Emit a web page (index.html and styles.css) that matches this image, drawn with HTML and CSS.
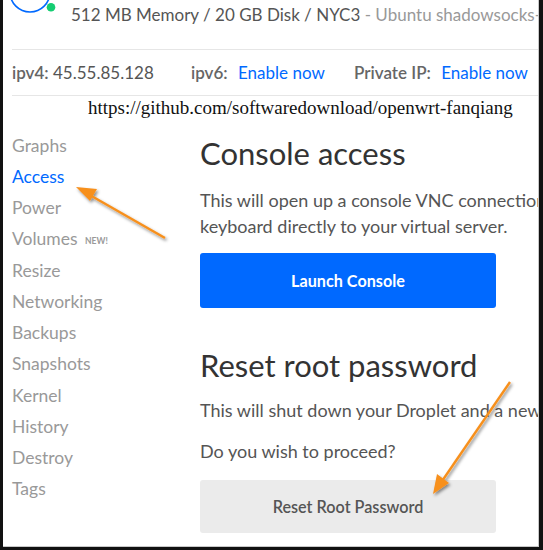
FILE: index.html
```html
<!DOCTYPE html>
<html>
<head>
<meta charset="utf-8">
<link rel="stylesheet" href="styles.css">
</head>
<body>
<div class="frame">
  <div class="inner">
    <header class="top">
      <svg class="logo" width="68" height="20" viewBox="0 0 68 20">
        <circle cx="27" cy="-8" r="20" fill="none" stroke="#0069ff" stroke-width="1.6"/>
        <circle cx="48" cy="7.3" r="4.3" fill="#15cd72"/>
      </svg>
      <span class="spec">512 MB Memory / 20 GB Disk / NYC3</span><span class="name">&nbsp;- Ubuntu shadowsocks-server</span>
    </header>
    <div class="ips">
      <span class="ip"><b>ipv4:</b> 45.55.85.128</span>
      <span class="ip"><b>ipv6:</b> <a>Enable now</a></span>
      <span class="ip"><b>Private IP:</b> <a>Enable now</a></span>
    </div>
    <div class="stamp">https://github.com/softwaredownload/openwrt-fanqiang</div>
    <div class="body">
      <nav class="side">
        <div class="item">Graphs</div>
        <div class="item active">Access</div>
        <div class="item">Power</div>
        <div class="item">Volumes <span class="new">NEW!</span></div>
        <div class="item">Resize</div>
        <div class="item">Networking</div>
        <div class="item">Backups</div>
        <div class="item">Snapshots</div>
        <div class="item">Kernel</div>
        <div class="item">History</div>
        <div class="item">Destroy</div>
        <div class="item">Tags</div>
      </nav>
      <main class="main">
        <h2 class="h">Console access</h2>
        <p class="txt"><span class="line">This will open up a console VNC connection to your Droplet, allowing you to use your mouse and</span><span class="line">keyboard directly to your virtual server.</span></p>
        <button class="btn primary">Launch Console</button>
        <h2 class="h h2">Reset root password</h2>
        <p class="txt t2"><span class="line">This will shut down your Droplet and a new password will be emailed to you.</span></p>
        <p class="txt q"><span class="line">Do you wish to proceed?</span></p>
        <button class="btn grey">Reset Root Password</button>
      </main>
    </div>
    <svg class="arrows" width="543" height="550" viewBox="0 0 543 550">
      <defs>
        <filter id="sh" x="-20%" y="-20%" width="140%" height="140%">
          <feDropShadow dx="1.5" dy="2" stdDeviation="1.5" flood-color="#000" flood-opacity="0.45"/>
        </filter>
      </defs>
      <g filter="url(#sh)" fill="#f7901e" stroke="#f7901e">
        <line x1="165" y1="238" x2="88" y2="194" stroke-width="2.4"/>
        <polygon points="76,187 97,189 90,201" stroke="none"/>
        <line x1="510" y1="382" x2="440" y2="484" stroke-width="2.4"/>
        <polygon points="433,494 437,474 449,483" stroke="none"/>
      </g>
    </svg>
  </div>
</div>
</body>
</html>
```
FILE: styles.css
```css
* { box-sizing: border-box; }
html, body { margin: 0; padding: 0; background: #fff; }
body { font-family: Lato, "Open Sans", sans-serif; color: #555; }
.frame {
  width: 543px; height: 550px;
  border-left: 3px solid #111;
  border-right: 4px solid #111;
  border-bottom: 3px solid #111;
  overflow: hidden;
}
.inner {
  position: relative;
  height: 100%;
  border-right: 1px solid #c8c8c8;
  border-bottom: 1px solid #c8c8c8;
  overflow: hidden;
}
.top {
  margin-left: 9px;
  height: 50px;
  padding-top: 1px;
  border-bottom: 1px solid #e6e6e6;
  display: flex;
  align-items: flex-start;
  white-space: nowrap;
  font-size: 17px;
  line-height: 27px;
}
.logo { display: block; margin-left: -9px; margin-top: -1px; flex: none; }
.spec { color: #555; }
.name { color: #999; }
.ips {
  margin-left: 9px;
  height: 46px;
  border-bottom: 1px solid #e6e6e6;
  display: grid;
  grid-template-columns: 179px 163px auto;
  align-items: center;
  white-space: nowrap;
  font-size: 17px;
  color: #555;
}
.ip b { font-weight: 600; color: #666; }
.ip a { color: #0069ff; margin-left: 6px; }
.stamp {
  font-family: "Liberation Serif", serif;
  font-size: 19px;
  color: #111;
  padding-left: 85px;
  line-height: 23px;
}
.body {
  display: grid;
  grid-template-columns: 188px 700px;
  padding-left: 9px;
}
.side { padding-top: 10.5px; }
.item {
  font-size: 17.5px;
  line-height: 31.27px;
  height: 31.27px;
  color: #999;
}
.item.active { color: #0069ff; }
.new { font-size: 8.5px; font-weight: 700; color: #999; margin-left: 3px; line-height: 0; vertical-align: 1px; }
.main { padding-top: 14px; }
.h {
  margin: 0;
  font-weight: 400;
  font-size: 31px;
  line-height: 40px;
  color: #333;
}
.txt { margin: 14px 0 0; font-size: 18px; line-height: 26px; color: #555; }
.line { display: block; white-space: nowrap; }
.btn {
  display: block;
  width: 296px;
  border: 0;
  border-radius: 3px;
  font-family: inherit;
  font-size: 16.2px;
  font-weight: 700;
  padding: 0;
}
.primary { background: #0069ff; color: #fff; margin-top: 14px; height: 55px; }
.h2 { margin-top: 37px; }
.t2 { margin-top: 12px; }
.q { margin-top: 15px; }
.grey { background: #ebebeb; color: #555; margin-top: 16px; height: 53px; font-weight: 600; }
.arrows { position: absolute; left: -3px; top: 0; pointer-events: none; }
```
